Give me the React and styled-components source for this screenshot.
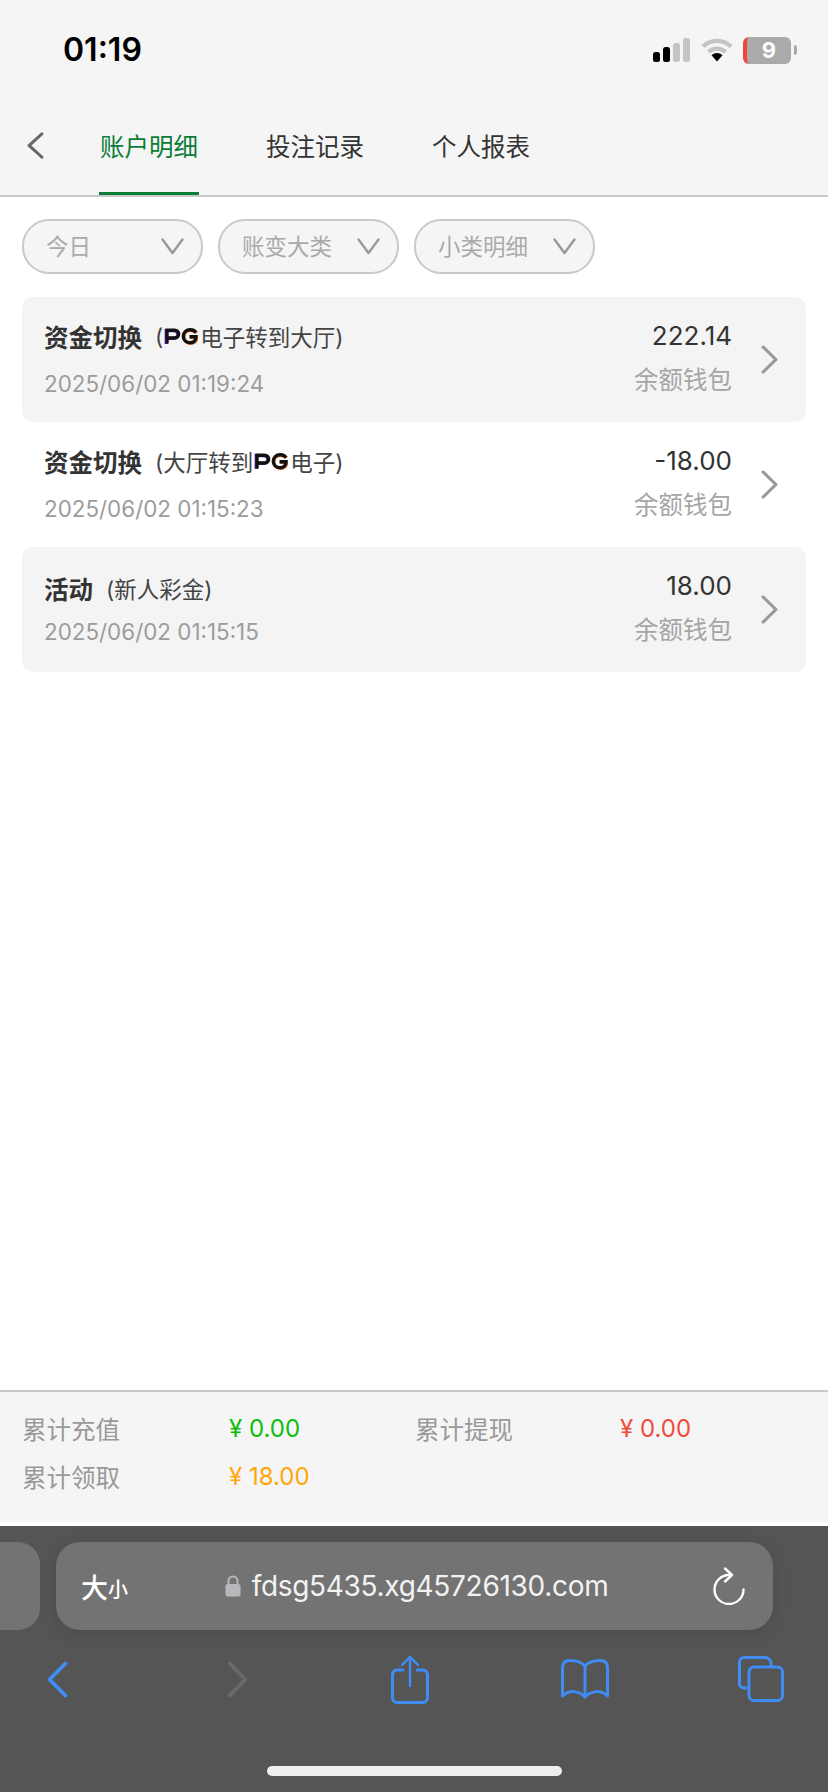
import styled, { createGlobalStyle } from "styled-components"

const GlobalStyle = createGlobalStyle`
	* {
		box-sizing: border-box;
	}
	html,
	body {
		margin: 0;
		padding: 0;
		background: #fff;
	}
	body {
		font-family: Inter, "Noto Sans CJK SC", sans-serif;
	}
`

const Page = styled.div`
	width: 828px;
	height: 1792px;
	display: flex;
	flex-direction: column;
	overflow: hidden;
	background: #fff;
`

const Top = styled.header`
	background: #f5f5f5;
	border-bottom: 2px solid #c9c9c9;
`

const StatusBar = styled.div`
	height: 100px;
	display: flex;
	align-items: flex-start;
	justify-content: space-between;
	padding: 30px 37px 0 63px;
`

const Time = styled.div`
	font-size: 32px;
	line-height: 40px;
	font-weight: 600;
	color: #000;
`

const StatusIcons = styled.div`
	display: flex;
	align-items: center;
	height: 40px;
	gap: 10px;
`

const Battery = styled.div`
	position: relative;
	width: 48px;
	height: 27px;
	border-radius: 6px;
	border-left: 4px solid #f0453a;
	background: #aaa;
	color: #fff;
	font-size: 22px;
	font-weight: 700;
	line-height: 27px;
	text-align: center;

	&::after {
		content: "";
		position: absolute;
		right: -6px;
		top: 8px;
		width: 3px;
		height: 10px;
		border-radius: 0 3px 3px 0;
		background: #aaa;
	}
`

const TabRow = styled.nav`
	height: 95px;
	display: flex;
	align-items: stretch;
	padding-left: 27px;
`

const Back = styled.div`
	width: 72px;
	display: flex;
	align-items: center;
	padding-bottom: 4px;
`

const Tab = styled.div`
	width: 100px;
	margin-right: 66px;
	display: flex;
	align-items: center;
	justify-content: center;
	white-space: nowrap;
	font-size: 24.5px;
	padding-bottom: 2px;
	color: ${(p) => (p.$active ? "#0b7d38" : "#333")};
	border-bottom: 3px solid ${(p) => (p.$active ? "#0b7d38" : "transparent")};
`

const Filters = styled.div`
	display: flex;
	gap: 15px;
	padding: 22px 22px 23px;
`

const Pill = styled.div`
	width: 181px;
	height: 55px;
	display: flex;
	align-items: center;
	justify-content: space-between;
	padding: 0 17px 4px 22px;
	border: 2px solid #c9c9c9;
	border-radius: 27px;
	background: #f5f5f5;
	color: #aaa;
	font-size: 22.5px;

	svg {
		margin-top: 4px;
	}
`

const List = styled.div`
	display: flex;
	flex-direction: column;
	padding: 0 22px;
`

const Card = styled.div`
	height: 125px;
	display: flex;
	justify-content: space-between;
	padding: 0 28px 0 22px;
	border-radius: 11px;
	background: ${(p) => (p.$shaded ? "#f4f4f4" : "transparent")};
`

const Left = styled.div`
	display: flex;
	flex-direction: column;
	padding-top: ${(p) => (p.$compact ? "26px" : "24px")};
	gap: ${(p) => (p.$compact ? "10px" : "14px")};
`

const TitleLine = styled.div`
	height: 34px;
	display: flex;
	align-items: center;
	white-space: nowrap;
	padding-bottom: 4px;
`

const Title = styled.span`
	font-size: 24.5px;
	font-weight: 700;
	color: #333;
	margin-right: 13px;
`

const Sub = styled.span`
	display: flex;
	align-items: center;
	font-size: 22.5px;
	color: #444;
`

const Date = styled.div`
	font-size: 22.4px;
	line-height: 30px;
	color: #9c9c9c;
`

const Right = styled.div`
	display: flex;
	align-items: center;
	gap: 29px;
`

const Values = styled.div`
	display: flex;
	flex-direction: column;
	align-items: flex-end;
	gap: 12px;
	padding-bottom: 3px;
`

const Amount = styled.div`
	font-size: 26px;
	line-height: 32px;
	color: #333;
`

const Wallet = styled.div`
	font-size: 24.5px;
	line-height: 32px;
	color: #a5a5a5;
`

const Spacer = styled.div`
	flex: 1;
`

const Summary = styled.section`
	height: 132px;
	display: grid;
	grid-template-columns: 207px 186px 205px 1fr;
	grid-auto-rows: 48px;
	align-items: center;
	padding: 12px 0 0 22px;
	border-top: 2px solid #c9c9c9;
	background: #f5f5f5;
`

const Label = styled.div`
	font-size: 24.5px;
	color: #999;
`

const Money = styled.div`
	font-size: 24px;
	color: ${(p) => p.$color};
`

const Chrome = styled.section`
	height: 266px;
	margin-top: 4px;
	display: flex;
	flex-direction: column;
	padding-top: 16px;
	background: #555;
`

const AddressRow = styled.div`
	display: flex;
	gap: 16px;
	height: 88px;
	padding-right: 55px;
`

const TabStub = styled.div`
	width: 40px;
	border-radius: 0 22px 22px 0;
	background: #737373;
`

const Address = styled.div`
	flex: 1;
	display: flex;
	align-items: center;
	padding: 0 28px 0 25px;
	border-radius: 24px;
	background: #737373;
	color: #fff;
	box-shadow: 0 4px 18px rgba(0, 0, 0, 0.12);
`

const AaBig = styled.span`
	font-size: 27px;
	font-weight: 500;
`

const AaSmall = styled.span`
	font-size: 20px;
	font-weight: 500;
	margin-top: 5px;
`

const Url = styled.div`
	flex: 1;
	display: flex;
	align-items: center;
	justify-content: center;
	gap: 11px;
	font-size: 28px;
	letter-spacing: -0.3px;
	padding-right: 8px;
	color: #f2f2f2;
`

const NavRow = styled.div`
	display: flex;
	align-items: center;
	height: 76px;
	margin-top: 11px;
	padding-left: 47px;
`

const NavSlot = styled.div`
	display: flex;
	align-items: center;
	margin-left: ${(p) => p.$gap || 0}px;
`

const HomeBar = styled.div`
	width: 295px;
	height: 10px;
	margin: 49px auto 0;
	border-radius: 5px;
	background: #eee;
`

function Signal() {
	return (
		<svg width="38" height="24" viewBox="0 0 38 24">
			<rect x="0" y="14" width="7" height="10" rx="2.5" fill="#000" />
			<rect x="10" y="9" width="7" height="15" rx="2.5" fill="#000" />
			<rect x="20" y="5" width="7" height="19" rx="2.5" fill="#c4c4c4" />
			<rect x="30" y="0" width="7" height="24" rx="2.5" fill="#c4c4c4" />
		</svg>
	)
}

function Wifi() {
	return (
		<svg width="32" height="24" viewBox="0 0 32 24" fill="none">
			<path d="M2 8.5C10 1 22 1 30 8.5" stroke="#c4c4c4" strokeWidth="4.4" />
			<path d="M7.5 14C12.5 9.5 19.5 9.5 24.5 14" stroke="#c4c4c4" strokeWidth="4.2" />
			<path d="M10.5 17.2C14 14.2 18 14.2 21.5 17.2L16 23.5Z" fill="#000" />
		</svg>
	)
}

function Chevron({ dir = "right", w, h, color, weight = 3 }) {
	const d = dir === "right" ? "M2 2L14 15L2 28" : "M14 2L2 15L14 28"
	return (
		<svg width={w} height={h} viewBox="0 0 16 30" fill="none" preserveAspectRatio="none">
			<path d={d} stroke={color} strokeWidth={weight} strokeLinecap="round" strokeLinejoin="round" />
		</svg>
	)
}

function PillArrow() {
	return (
		<svg width="23" height="17" viewBox="0 0 23 17" fill="none">
			<path d="M1.5 1.5L11.5 15L21.5 1.5" stroke="#999" strokeWidth="2.4" strokeLinecap="round" strokeLinejoin="round" />
		</svg>
	)
}

function PgLogo() {
	return (
		<svg width="34" height="18" viewBox="0 0 34 18" fill="none" style={{ margin: "0 2px 0 1px" }}>
			<path d="M3 16.5V3.2H10.5C16 3.2 16 11 10.5 11H3.5" stroke="#7a2bd6" strokeWidth="3.4" transform="translate(-0.7 0.4)" />
			<path d="M3 16.5V3.2H10.5C16 3.2 16 11 10.5 11H3.5" stroke="#111" strokeWidth="3.4" />
			<path d="M32 5.5C30.5 3.6 28.5 2.8 26.3 2.8C22 2.8 19.3 5.6 19.3 9.3C19.3 13 22 15.7 26 15.7C29.5 15.7 32 13.6 32 9.8H25.5" stroke="#f0722a" strokeWidth="3.4" transform="translate(0.6 0.5)" />
			<path d="M32 5.5C30.5 3.6 28.5 2.8 26.3 2.8C22 2.8 19.3 5.6 19.3 9.3C19.3 13 22 15.7 26 15.7C29.5 15.7 32 13.6 32 9.8H25.5" stroke="#111" strokeWidth="3.4" />
		</svg>
	)
}

function Lock() {
	return (
		<svg width="16" height="22" viewBox="0 0 16 22" fill="none">
			<path d="M3.5 9V6a4.500 4.500 0 0 1 9 0v3" stroke="#b8b8bc" strokeWidth="2" />
			<rect x="0.5" y="9" width="15" height="12.500" rx="2.500" fill="#b8b8bc" />
		</svg>
	)
}

function Reload() {
	return (
		<svg width="32" height="38" viewBox="0 0 32 38" fill="none" stroke="#fff" strokeWidth="2.4" strokeLinecap="round" strokeLinejoin="round">
			<path d="M16 8A14.500 14.500 0 1 0 30.500 22.500" />
			<path d="M12 1.500L19 8L12 14.500" />
		</svg>
	)
}

function Share() {
	return (
		<svg width="38" height="49" viewBox="0 0 38 49" fill="none" stroke="#3f8cf5" strokeWidth="3" strokeLinecap="round" strokeLinejoin="round">
			<path d="M12 15H6a4.500 4.500 0 0 0-4.500 4.500V43A4.500 4.500 0 0 0 6 47.500H32a4.500 4.500 0 0 0 4.500-4.500V19.500A4.500 4.500 0 0 0 32 15H26" />
			<path d="M19 2V31" strokeWidth="2.4" />
			<path d="M11 10L19 2L27 10" strokeWidth="2.4" />
		</svg>
	)
}

function Book() {
	return (
		<svg width="48" height="40" viewBox="0 0 48 40" fill="none" stroke="#3f8cf5" strokeWidth="3" strokeLinecap="round" strokeLinejoin="round">
			<path d="M24 7C20 2.500 15 1.500 9 1.500C4.500 1.500 1.500 4 1.500 9V37C8 31 17 31 24 38C31 31 40 31 46.500 37V9C46.500 4 43.500 1.500 39 1.500C33 1.500 28 2.500 24 7Z" />
			<path d="M24 7V38" />
		</svg>
	)
}

function Tabs() {
	return (
		<svg width="46" height="46" viewBox="0 0 46 46" fill="none" stroke="#3f8cf5" strokeWidth="3" strokeLinejoin="round">
			<path d="M9.500 32H6a4.500 4.500 0 0 1-4.500-4.500V6A4.500 4.500 0 0 1 6 1.500H27A6 6 0 0 1 33 7.500V10" />
			<rect x="11" y="11" width="33.500" height="33.500" rx="5" />
		</svg>
	)
}

const records = [
	{ id: 1, title: "资金切换", amount: "222.14", date: "2025/06/02 01:19:24", before: "(", after: "电子转到大厅)", logo: true, shaded: true },
	{ id: 2, title: "资金切换", amount: "-18.00", date: "2025/06/02 01:15:23", before: "(大厅转到", after: "电子)", logo: true },
	{ id: 3, title: "活动", amount: "18.00", date: "2025/06/02 01:15:15", before: "(新人彩金)", shaded: true, compact: true },
]

export default function App() {
	return (
		<Page>
			<GlobalStyle />
			<Top>
				<StatusBar>
					<Time>01:19</Time>
					<StatusIcons>
						<Signal />
						<Wifi />
						<Battery>9</Battery>
					</StatusIcons>
				</StatusBar>
				<TabRow>
					<Back>
						<Chevron dir="left" w={17} h={27} color="#666" />
					</Back>
					<Tab $active>账户明细</Tab>
					<Tab>投注记录</Tab>
					<Tab>个人报表</Tab>
				</TabRow>
			</Top>
			<Filters>
				{["今日", "账变大类", "小类明细"].map((text) => (
					<Pill key={text}>
						{text}
						<PillArrow />
					</Pill>
				))}
			</Filters>
			<List>
				{records.map((r) => (
					<Card key={r.id} $shaded={r.shaded}>
						<Left $compact={r.compact}>
							<TitleLine>
								<Title>{r.title}</Title>
								<Sub>
									{r.before}
									{r.logo && <PgLogo />}
									{r.after}
								</Sub>
							</TitleLine>
							<Date>{r.date}</Date>
						</Left>
						<Right>
							<Values>
								<Amount>{r.amount}</Amount>
								<Wallet>余额钱包</Wallet>
							</Values>
							<Chevron w={17} h={29} color="#999" />
						</Right>
					</Card>
				))}
			</List>
			<Spacer />
			<Summary>
				<Label>累计充值</Label>
				<Money $color="#0cbf0c">¥ 0.00</Money>
				<Label>累计提现</Label>
				<Money $color="#ee4d3d">¥ 0.00</Money>
				<Label>累计领取</Label>
				<Money $color="#ffa60a">¥ 18.00</Money>
			</Summary>
			<Chrome>
				<AddressRow>
					<TabStub />
					<Address>
						<AaBig>大</AaBig>
						<AaSmall>小</AaSmall>
						<Url>
							<Lock />
							fdsg5435.xg45726130.com
						</Url>
						<Reload />
					</Address>
				</AddressRow>
				<NavRow>
					<NavSlot>
						<Chevron dir="left" w={21} h={37} color="#3f8cf5" />
					</NavSlot>
					<NavSlot $gap={159}>
						<Chevron w={21} h={37} color="#6a6a6a" />
					</NavSlot>
					<NavSlot $gap={143}>
						<Share />
					</NavSlot>
					<NavSlot $gap={132}>
						<Book />
					</NavSlot>
					<NavSlot $gap={129}>
						<Tabs />
					</NavSlot>
				</NavRow>
				<HomeBar />
			</Chrome>
		</Page>
	)
}
